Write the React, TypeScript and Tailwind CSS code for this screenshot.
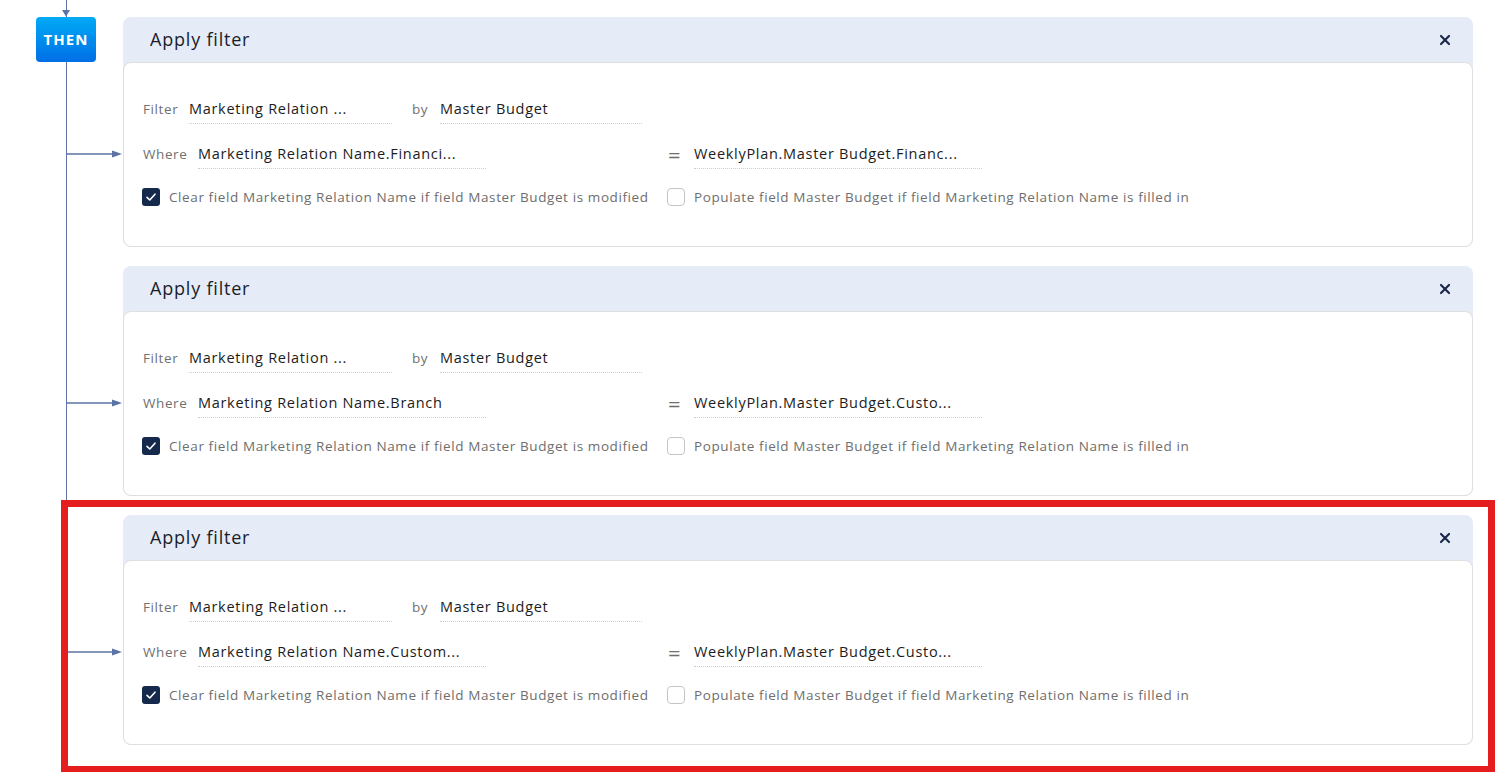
import { X } from "lucide-react";

type Rule = {
  where: string;
  target: string;
};

const rules: Rule[] = [
  { where: "Marketing Relation Name.Financi...", target: "WeeklyPlan.Master Budget.Financ..." },
  { where: "Marketing Relation Name.Branch", target: "WeeklyPlan.Master Budget.Custo..." },
  { where: "Marketing Relation Name.Custom...", target: "WeeklyPlan.Master Budget.Custo..." },
];

const Arrow = () => (
  <svg width="57" height="10" viewBox="0 0 57 10" className="ml-[66px] block">
    <line x1="0" y1="5" x2="48" y2="5" stroke="#5b74a5" strokeWidth="1.3" />
    <path d="M46 1.5 L56 5 L46 8.5 Z" fill="#5b74a5" />
  </svg>
);

const Checkbox = ({ checked }: { checked: boolean }) =>
  checked ? (
    <span className="flex h-[18px] w-[18px] shrink-0 items-center justify-center rounded-[3px] bg-[#14294b]">
      <svg width="12" height="12" viewBox="0 0 12 12">
        <path d="M2 6.3 L4.8 9 L10 3.2" fill="none" stroke="white" strokeWidth="1.6" strokeLinecap="round" strokeLinejoin="round" />
      </svg>
    </span>
  ) : (
    <span className="h-[18px] w-[18px] shrink-0 rounded-[4px] border-[1.5px] border-[#c4c4c4] bg-white" />
  );

const Field = ({ value, width }: { value: string; width: string }) => (
  <span className={`${width} flex h-[30px] items-center overflow-hidden whitespace-nowrap border-b border-dotted border-[#cfcfcf] text-[14.5px] tracking-[0.7px] text-[#1c1c1c]`}>
    {value}
  </span>
);

const FilterCard = ({ rule }: { rule: Rule }) => (
  <div className="flex-1 rounded-[8px] bg-[#e5ebf7]">
    <div className="flex h-[45px] items-center justify-between pl-[27px] pr-[20px]">
      <span className="text-[18px] tracking-[0.8px] text-[#1a1d29]">Apply filter</span>
      <X size={16} strokeWidth={3.2} className="text-[#1b2a4a]" />
    </div>
    <div className="h-[185px] rounded-[8px] border border-[#dfdfdf] bg-white pl-[19px] pt-[31px] text-[13.5px] tracking-[0.6px]">
      <div className="flex h-[30px] items-end">
        <span className="flex h-[30px] w-[46px] items-center text-[#707070]">Filter</span>
        <Field value="Marketing Relation ..." width="w-[203px]" />
        <span className="ml-[20px] flex h-[30px] w-[28px] items-center text-[#707070]">by</span>
        <Field value="Master Budget" width="w-[202px]" />
      </div>
      <div className="mt-[15px] flex h-[30px] items-end">
        <span className="flex h-[30px] w-[55px] items-center text-[#707070]">Where</span>
        <Field value={rule.where} width="w-[288px]" />
        <span className="ml-[182px] flex h-[30px] w-[26px] items-center text-[22px] leading-none text-[#6f6f6f]">=</span>
        <Field value={rule.target} width="w-[288px]" />
      </div>
      <div className="mt-[13px] flex h-[30px] items-center">
        <div className="-ml-px flex w-[525px] items-center gap-[9px]">
          <Checkbox checked />
          <span className="whitespace-nowrap text-[#6e6e6e]">
            Clear field Marketing Relation Name if field Master Budget is modified
          </span>
        </div>
        <div className="flex items-center gap-[9px]">
          <Checkbox checked={false} />
          <span className="whitespace-nowrap text-[#6e6e6e]">
            Populate field Master Budget if field Marketing Relation Name is filled in
          </span>
        </div>
      </div>
    </div>
  </div>
);

export default function App() {
  return (
    <div className="relative h-[772px] w-[1495px] overflow-hidden bg-white font-['Open_Sans',sans-serif]">
      {/* trunk of the flow diagram */}
      <div className="absolute left-[65.5px] top-0 h-[772px] w-[1.3px] bg-[#5b74a5]" />
      <svg width="12" height="17" viewBox="0 0 12 17" className="absolute left-[60px] top-0">
        <path d="M2 10 L6 16.5 L10 10 Z" fill="#5b74a5" />
      </svg>

      <div className="flex flex-col gap-[19px] pr-[22px] pt-[17px]">
        {rules.map((rule, i) => (
          <div key={i} className="relative flex">
            <div className="flex w-[123px] shrink-0 flex-col">
              {i === 0 ? (
                <>
                  <div className="relative ml-[36px] flex h-[45px] w-[60px] items-center justify-center rounded-[4px] bg-gradient-to-b from-[#05aaf5] to-[#006ee6] text-[15px] font-bold tracking-[1px] text-white">
                    THEN
                  </div>
                  <div className="mt-[87px]">
                    <Arrow />
                  </div>
                </>
              ) : (
                <div className="mt-[132px]">
                  <Arrow />
                </div>
              )}
            </div>
            <FilterCard rule={rule} />
            {i === 2 && (
              <div className="pointer-events-none absolute -bottom-[28px] -top-[15px] left-[61px] right-[-22px] border-[7px] border-[#e41e1e]" />
            )}
          </div>
        ))}
      </div>
    </div>
  );
}
